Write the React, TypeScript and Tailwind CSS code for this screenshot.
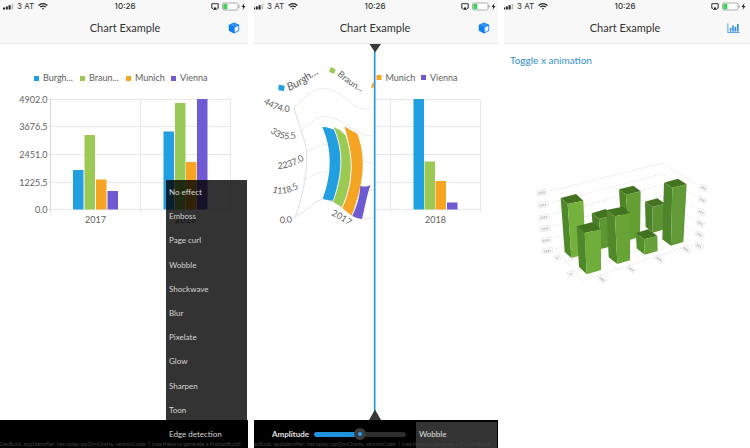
import React from "react";

const COLORS = {
  blue: "#219fe0",
  green: "#9aca54",
  orange: "#f6a423",
  purple: "#6e5bd3",
};

const LEGEND = [
  { label: "Burgh...", swatch: "bg-[#219fe0]", width: "w-[46px]" },
  { label: "Braun...", swatch: "bg-[#9aca54]", width: "w-[46px]" },
  { label: "Munich", swatch: "bg-[#f6a423]", width: "w-[45px]" },
  { label: "Vienna", swatch: "bg-[#6e5bd3]", width: "w-[40px]" },
];

const EFFECTS = [
  "No effect",
  "Emboss",
  "Page curl",
  "Wobble",
  "Shockwave",
  "Blur",
  "Pixelate",
  "Glow",
  "Sharpen",
  "Toon",
  "Edge detection",
];

const BUILD_INFO =
  "DevBuild, appIdentifier: net.vplay.cppQmlCharts, versionCode: 1 (use these to generate a PublishBuild)";

function StatusBar() {
  return (
    <div className="relative flex h-[13px] items-center justify-between pl-[3px] pr-[3px] font-['Inter',sans-serif] text-[8px] leading-[13px] text-[#333]">
      <div className="flex items-center">
        <svg width="11" height="6" viewBox="0 0 11 6" fill="#222" aria-hidden="true">
          <rect x="0" y="3.5" width="2" height="2" />
          <rect x="2.8" y="2.5" width="2" height="3" />
          <rect x="5.6" y="1.2" width="2" height="4.3" />
          <rect x="8.6" y="0" width="1.6" height="5.5" fill="#bbb" />
        </svg>
        <span className="ml-[3px]">3 AT</span>
        <svg className="ml-[4px]" width="10" height="7" viewBox="0 0 10 7" fill="none" stroke="#222" strokeWidth="1.3" aria-hidden="true">
          <path d="M.5 2.4Q5-1 9.500 2.400" />
          <path d="M2.200 4.100Q5 2 7.800 4.100" />
          <path d="M3.800 5.200h2.400L5 6.800z" fill="#222" stroke="none" />
        </svg>
      </div>
      <time className="absolute left-1/2 -translate-x-1/2 font-medium">10:26</time>
      <div className="flex items-center">
        <svg width="8" height="7" viewBox="0 0 8 7" aria-hidden="true">
          <path d="M2 5.200H.8V.7h6.400v4.500H6" fill="none" stroke="#333" />
          <path d="M4 3.800 6.200 6.800H1.800z" fill="#222" />
        </svg>
        <svg className="ml-[3px]" width="25" height="9" viewBox="0 0 25 9" aria-hidden="true">
          <rect x=".5" y="1" width="15.500" height="7" rx="1.500" fill="#fff" stroke="#999" strokeWidth=".8" />
          <rect x="1.300" y="1.800" width="4" height="5.400" fill="#3fd158" />
          <path d="M17 3.300v2.400" stroke="#999" />
          <path d="M22.500 1 19.500 5h1.800l-.8 3 3-4h-1.800z" fill="#222" />
        </svg>
      </div>
    </div>
  );
}

function CubeIcon() {
  return (
    <svg width="12" height="12" viewBox="0 0 12 12" aria-hidden="true">
      <path d="M6 .6 11.200 2.700V8.800L6 11.500.8 8.800V2.700z" fill="#0d7df2" />
      <path d="M6 1.300 10.300 3 6 4.800 1.700 3z" fill="#3b97f5" />
      <path d="M6.700 5.400 10.400 3.800V8.300L6.700 10.200z" fill="#f4f8fd" />
    </svg>
  );
}

function BarsIcon() {
  return (
    <svg width="13" height="12" viewBox="0 0 13 12" fill="#2b8ce8" aria-hidden="true">
      <path d="M.5 1.500h.8v8.700H12.700v.8H.5z" />
      <rect x="2.800" y="6" width="1.600" height="3.600" />
      <rect x="5.200" y="3.500" width="1.600" height="6.100" />
      <rect x="7.600" y="5" width="1.600" height="4.600" />
      <rect x="10" y="2" width="1.600" height="7.600" />
    </svg>
  );
}

function Header({ icon, action }: { icon: React.ReactNode; action: string }) {
  return (
    <header className="h-[44px] border-b border-[#e4e4e4] bg-[#f8f8f9]">
      <StatusBar />
      <div className="relative flex h-[30px] items-center justify-center">
        <h1 className="text-[11px] leading-[16px] text-[#333]">Chart Example</h1>
        <button type="button" aria-label={action} className="absolute right-[10px] flex">
          {icon}
        </button>
      </div>
    </header>
  );
}

function Phone({ clip, children }: { clip: string; children: React.ReactNode }) {
  return (
    <section className="flex min-w-0 overflow-hidden">
      <div className={"flex min-w-0 flex-1 overflow-hidden " + clip}>{children}</div>
    </section>
  );
}

function BuildInfo() {
  return (
    <p className="pointer-events-none absolute bottom-0 left-0 w-full whitespace-nowrap font-['Noto_Sans',sans-serif] text-[5px] leading-[7px] text-[#454545]">
      {BUILD_INFO}
    </p>
  );
}

function Grid({ left }: { left: number }) {
  return (
    <g stroke="#e8e8e8" strokeWidth="1">
      {[9.5, 36.5, 64.5, 92.5, 119.5].map((y) => (
        <path key={y} d={`M${left} ${y}H231`} />
      ))}
      <path d="M140.500 9v114M230.500 9v114" />
    </g>
  );
}

function Bars({ data }: { data: [number, number, string][] }) {
  return (
    <>
      {data.map(([x, y, fill]) => (
        <rect key={x} x={x} y={y} width="10.500" height={119.5 - y} fill={fill} />
      ))}
    </>
  );
}

function YearChart() {
  return (
    <svg viewBox="0 0 250 140" className="block w-full" role="img" aria-label="Values by city, 2017 and 2018">
      <Grid left={48} />
      <path d="M50.500 9v114" stroke="#d9d9d9" />
      <Bars
        data={[
          [73, 80, COLORS.blue],
          [84.5, 45, COLORS.green],
          [96, 89.500, COLORS.orange],
          [107.5, 101, COLORS.purple],
          [163.5, 41.500, COLORS.blue],
          [175, 13, COLORS.green],
          [186, 72, COLORS.orange],
          [197, 9, COLORS.purple],
        ]}
      />
      <g fill="#606060" fontSize="9" textAnchor="end">
        <text x="47.500" y="12.500">4902.0</text>
        <text x="47.500" y="40">3676.5</text>
        <text x="47.500" y="68">2451.0</text>
        <text x="47.500" y="96">1225.5</text>
        <text x="47.500" y="123">0.0</text>
      </g>
      <g fill="#606060" fontSize="9" textAnchor="middle">
        <text x="95.500" y="132.500">2017</text>
        <text x="185.500" y="132.500">2018</text>
      </g>
    </svg>
  );
}

const WOBBLE_LABELS = [
  { id: "burgh", text: "Burgh...", d: "M39 91Q51 86 60 79T90 67" },
  { id: "braun", text: "Braun...", d: "M87 75Q97 84 106 89T134 94" },
  { id: "y4", text: "4474.0", d: "M13 103Q26 112 40 112L60 112" },
  { id: "y3", text: "3355.5", d: "M20 132Q32 142 46 138L62 132" },
  { id: "y2", text: "2237.0", d: "M28 169Q42 168 54 160L66 152" },
  { id: "y1", text: "1118.5", d: "M22 192Q34 197 49 188L62 180" },
  { id: "y0", text: "0.0", d: "M30 223Q38 224 50 220" },
  { id: "x", text: "2017", d: "M81 215Q90 219 98 225L110 234" },
];

function WobbleChart() {
  return (
    <svg viewBox="0 44 250 376" className="block h-full w-full" role="img" aria-label="Wobble effect compared with the plain chart">
      <g transform="translate(0 50) scale(.33333)">
        <g fill="none" stroke="#dedede" strokeWidth="2.500">
          <path d="M133 172C142 225 170 265 170 320S158 440 135 503" stroke="#cfcfcf" strokeDasharray="5 1" />
          <path d="M133 170C160 150 185 115 220 115 280 120 300 172 345 178L372 172" strokeDasharray="6 2" />
          <path d="M150 243C178 228 190 199 225 200 290 205 310 260 372 258" strokeDasharray="6 2" />
          <path d="M168 305C190 299 205 282 235 284 290 290 320 340 372 338" strokeDasharray="6 2" />
          <path d="M160 388C190 380 200 365 230 366 290 372 320 425 372 420" strokeDasharray="6 2" />
          <path d="M133 502C170 484 195 450 220 447 265 452 300 502 340 508L372 502" />
        </g>
        <path d="M217 231 230 232 253 239C281 305 278 370 250 453L218 447C246 370 247 300 217 231z" fill={COLORS.blue} />
        <path d="M251 231 270 241 290 259C312 330 308 400 277 472L249 455C280 370 279 300 251 231z" fill={COLORS.green} />
        <path d="M283 229 300 239 322 251C347 320 345 390 305 497L277 474C312 400 312 320 283 229z" fill={COLORS.orange} />
        <path d="M250 453C278 370 281 305 253 239M277 472C308 400 312 330 288 257" fill="none" stroke="#fff" strokeWidth="2.500" />
        <path d="M331 407Q347 413 362 405C352 430 345 470 336 507Q320 506 307 498C322 465 329 440 331 407z" fill={COLORS.purple} />
        <path d="m86 104 18 3-2 16-17-2z" fill={COLORS.blue} />
        <path d="m242 51 15 7-4 13-16-5z" fill={COLORS.green} />
        <path d="M371 95v16l-8 5 3-15z" fill={COLORS.orange} />
      </g>
      {WOBBLE_LABELS.map((l) => (
        <g key={l.id} fill="#606060" fontSize={l.id === "burgh" ? 11 : 9}>
          <path id={"wobble-" + l.id} d={l.d} fill="none" />
          <text fontStyle={l.id === "burgh" ? "italic" : "normal"}>
            <textPath href={"#wobble-" + l.id}>{l.text}</textPath>
          </text>
        </g>
      ))}
      <g transform="translate(0 90)">
        <Grid left={125} />
        <Bars
          data={[
            [163.5, 9, COLORS.blue],
            [174.5, 71.500, COLORS.green],
            [185.5, 91, COLORS.orange],
            [197, 112.500, COLORS.purple],
          ]}
        />
      </g>
      <rect x="126.500" y="75" width="5" height="5" fill={COLORS.orange} />
      <rect x="171" y="75" width="5" height="5" fill={COLORS.purple} />
      <g fill="#606060" fontSize="9">
        <text x="135.500" y="81">Munich</text>
        <text x="180" y="81">Vienna</text>
      </g>
      <text x="185.500" y="222.500" fill="#606060" fontSize="9" textAnchor="middle">2018</text>
      <path d="M124.700 44v376" stroke="#1d97df" strokeWidth="1.600" />
      <path d="M119.500 44h11.500L125 52.500zM119 420h12l-6-10.500z" fill="#383838" />
    </svg>
  );
}

// top: left, back, right and front corners; base: left, front and right corners
type Block = { top: number[][]; base: number[][]; side: string; face: string };

const BLOCKS: Block[] = [
  { top: [[375, 155], [412, 145], [435, 161], [397, 171]], base: [[377, 230], [398, 248], [434, 238]], side: "#4c8129", face: "#5d9433" },
  { top: [[297, 118], [340, 107], [362, 124], [318, 134]], base: [[305, 252], [328, 270], [360, 260]], side: "#4f8528", face: "#639f33" },
  { top: [[215, 190], [257, 177], [280, 196], [237, 207]], base: [[222, 278], [243, 297], [285, 286]], side: "#4a7e26", face: "#5c9731" },
  { top: [[122, 144], [168, 132], [190, 152], [143, 162]], base: [[134, 306], [154, 324], [197, 313]], side: "#4f8829", face: "#74b13d" },
  { top: [[432, 98], [474, 86], [500, 103], [457, 113]], base: [[427, 268], [453, 287], [490, 276]], side: "#4e852b", face: "#619a36" },
  { top: [[348, 249], [385, 238], [412, 258], [372, 268]], base: [[350, 295], [374, 314], [413, 303]], side: "#548d2c", face: "#66a137" },
  { top: [[260, 180], [308, 170], [331, 189], [285, 199]], base: [[266, 322], [292, 342], [330, 331]], side: "#50882a", face: "#68a435" },
  { top: [[170, 229], [216, 217], [243, 238], [194, 249]], base: [[177, 350], [200, 373], [243, 360]], side: "#4f8829", face: "#70ae3b" },
];

const LEFT_TICKS = [[66, 128], [69, 165], [72, 202], [76, 236], [79, 271], [83, 303]];
const RIGHT_TICKS = [[551, 114], [547, 150], [544, 187], [541, 220], [539, 254], [537, 288]];
const FLOOR_TICKS = [[246, 388], [334, 358], [418, 328], [498, 298], [152, 372], [112, 324]];

const pts = (p: number[][]) => p.map((q) => q.join(",")).join(" ");

function Tick({ x, y, angle, w }: { x: number; y: number; angle: number; w: number }) {
  return (
    <g transform={`translate(${x} ${y}) rotate(${angle})`} fill="none" strokeWidth="1.500">
      <rect x={-w / 2} y="-8" width={w} height="15" stroke="#dadada" />
      <path d={`M${-w / 2 + 4} 0H${w / 2 - 4}`} strokeWidth="7" strokeDasharray="4 1.500" stroke="#c6c6c6" />
    </g>
  );
}

function BlockChart() {
  return (
    <svg viewBox="0 0 250 150" className="block w-full" role="img" aria-label="Three-dimensional bar chart">
      <g transform="translate(20 0) scale(.33333)">
        <g fill="none" stroke="#dfdfdf" strokeWidth="2" strokeDasharray="7 4">
          {[0, 1, 2, 3, 4, 5].map((i) => (
            <path key={i} d={`M${90 + i * 3} ${123 + i * 35}L${428 - i * 2} ${39 + i * 33}L${532 - i * 3} ${104 + i * 35}`} />
          ))}
          <path d="M108 300 190 392 520 283M134 336 452 232M160 366 490 256M205 270 292 360M302 240 382 330M395 212 462 302" />
        </g>
        {BLOCKS.map((b, i) => (
          <g key={i}>
            <polygon points={pts(b.top)} fill="#44731f" />
            <polygon points={pts([b.top[0], b.top[3], b.base[1], b.base[0]])} fill={b.side} />
            <polygon points={pts([b.top[3], b.top[2], b.base[2], b.base[1]])} fill={b.face} />
          </g>
        ))}
        {LEFT_TICKS.map(([x, y]) => <Tick key={y} x={x} y={y} angle={-10} w={30} />)}
        {RIGHT_TICKS.map(([x, y]) => <Tick key={y} x={x} y={y} angle={28} w={24} />)}
        {FLOOR_TICKS.map(([x, y], i) => <Tick key={y} x={x} y={y} angle={i < 4 ? 35 : -25} w={i < 4 ? 26 : 16} />)}
      </g>
    </svg>
  );
}

export default function App() {
  return (
    <main className="grid min-h-screen grid-cols-3 bg-white font-['Lato',sans-serif]">
      <Phone clip="mr-[2px]">
        <div className="relative -mr-[2px] flex min-w-0 flex-1 flex-col">
          <Header icon={<CubeIcon />} action="Show 3D chart" />
          <div className="flex-1 pt-[26px]">
            <ul className="flex h-[16px] items-center pl-[34px] text-[9px] leading-[16px] text-[#606060]">
              {LEGEND.map((item) => (
                <li key={item.label} className={"flex shrink-0 items-center gap-[4px] " + item.width}>
                  <span className={"size-[5px] shrink-0 " + item.swatch} />
                  {item.label}
                </li>
              ))}
            </ul>
            <div className="pt-[4px]">
              <YearChart />
            </div>
          </div>
          <footer className="h-[28px] bg-black" />
          <ul
            aria-label="Effects"
            className="absolute bottom-0 right-[3px] flex h-[268px] w-[81px] flex-col bg-black/80 pb-[2px] text-[8px] text-[#d6d6d6]"
          >
            {EFFECTS.map((name) => (
              <li key={name} className="flex flex-1">
                <button type="button" className="w-full pl-[3px] text-left leading-[12px]">{name}</button>
              </li>
            ))}
          </ul>
          <BuildInfo />
        </div>
      </Phone>

      <Phone clip="ml-[4px] mr-[2px]">
        <div className="relative -ml-[4px] -mr-[2px] flex min-w-0 flex-1 flex-col">
          <Header icon={<CubeIcon />} action="Show 3D chart" />
          <div className="flex-1">
            <WobbleChart />
          </div>
          <footer className="flex h-[28px] items-center bg-black pl-[22px] pr-[3px] text-[8px] text-[#e0e0e0]">
            <label htmlFor="amplitude" className="w-[42px] shrink-0 font-bold">Amplitude</label>
            <input
              id="amplitude"
              type="range"
              min={0}
              max={100}
              defaultValue={50}
              className="h-[5px] w-[92px] min-w-0 appearance-none rounded-full bg-[linear-gradient(to_right,#1f93dc_50%,#2d2d2d_50%)] [&::-webkit-slider-thumb]:size-[12px] [&::-webkit-slider-thumb]:appearance-none [&::-webkit-slider-thumb]:rounded-full [&::-webkit-slider-thumb]:border-[4px] [&::-webkit-slider-thumb]:border-[#3a3d40] [&::-webkit-slider-thumb]:bg-[#2ba3ec]"
            />
            <select
              aria-label="Effect"
              defaultValue="Wobble"
              className="ml-auto mt-[2px] h-[26px] w-[81px] appearance-none bg-[#333] pb-[2px] pl-[3px] text-[8px]"
            >
              {EFFECTS.map((name) => (
                <option key={name}>{name}</option>
              ))}
            </select>
          </footer>
          <BuildInfo />
        </div>
      </Phone>

      <Phone clip="ml-[4px]">
        <div className="-ml-[4px] flex min-w-0 flex-1 flex-col">
          <Header icon={<BarsIcon />} action="Show bar chart" />
          <div className="pl-[10px] pt-[8px]">
            <button type="button" className="block text-[10px] leading-[16px] text-[#2e8fd6]">Toggle x animation</button>
          </div>
          <div className="pt-[82px]">
            <BlockChart />
          </div>
        </div>
      </Phone>
    </main>
  );
}
